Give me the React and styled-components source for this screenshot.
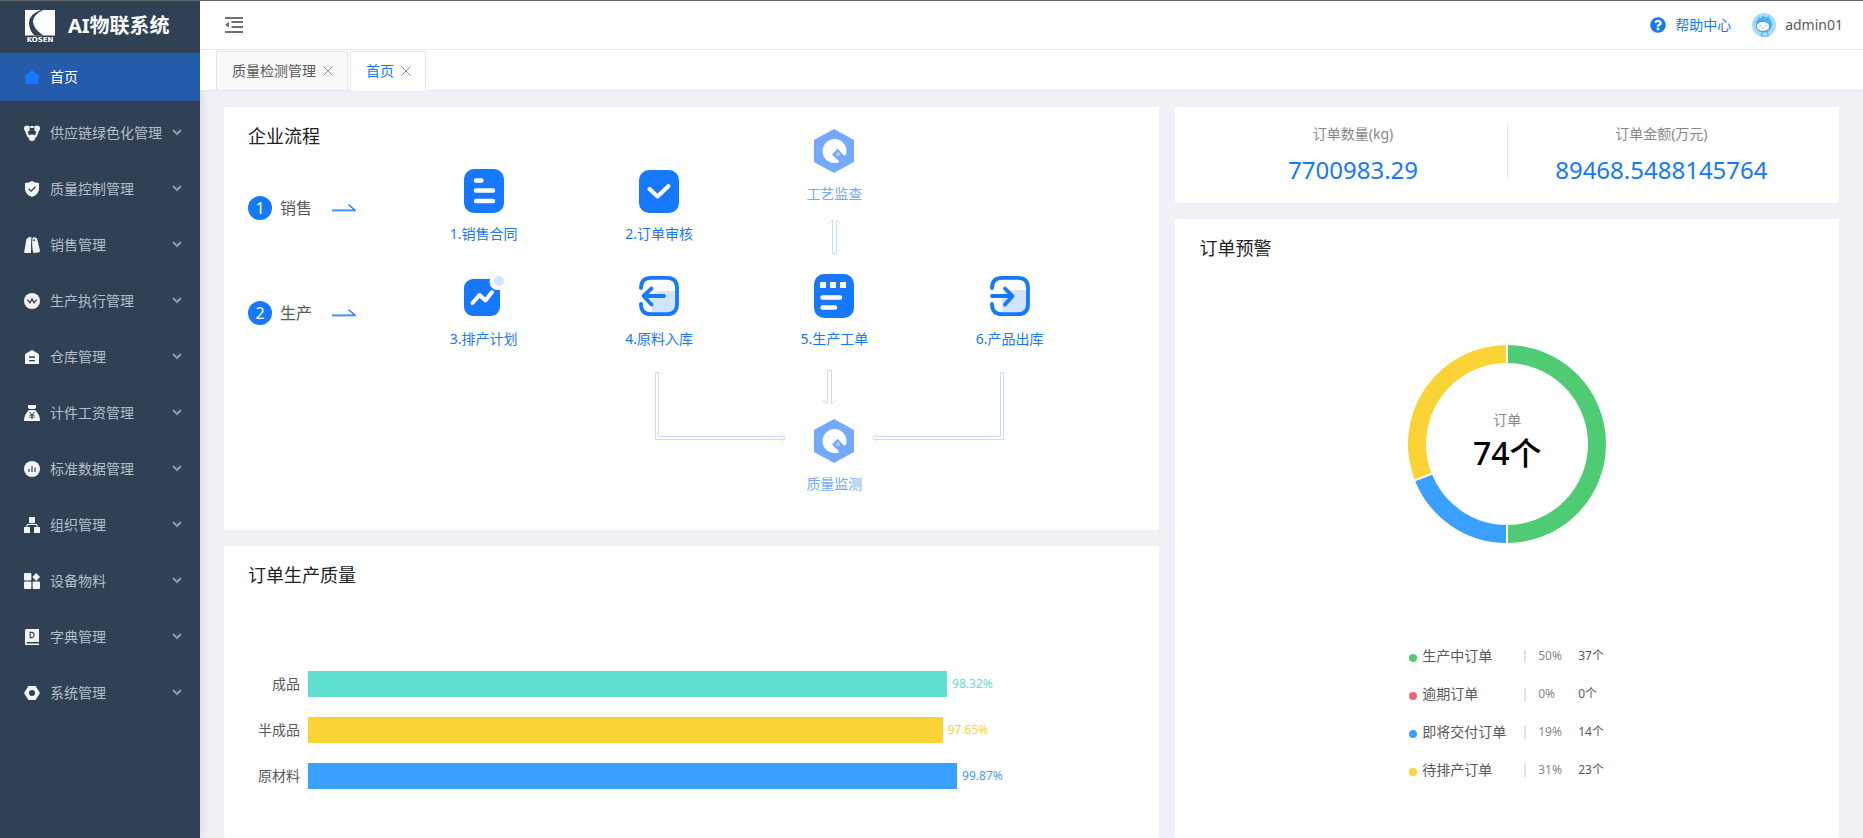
import React from "react";
import styled, { createGlobalStyle } from "styled-components";
import { FaQuestionCircle } from "react-icons/fa";

const GlobalStyle = createGlobalStyle`
  * {
    box-sizing: border-box;
  }

  body {
    margin: 0;
    background-color: #f0f1f6;
    color: #595959;
    font-family: "Noto Sans", "Noto Sans CJK SC", sans-serif;
    font-size: 14px;
    line-height: 22px;
  }

  a {
    color: inherit;
    text-decoration: none;
  }

  button {
    padding: 0;
    border: none;
    background: none;
    color: inherit;
    font: inherit;
    cursor: pointer;
  }

  ul {
    margin: 0;
    padding: 0;
    list-style: none;
  }

  svg {
    display: block;
    flex: none;
  }
`;

const Page = styled.div`
  display: flex;
  height: 100vh;
  overflow: hidden;
  border-top: 1px solid #666666;
`;

const Sidebar = styled.aside`
  flex: none;
  width: 200px;
  background-color: #304156;
  box-shadow: 2px 0 8px rgba(0, 21, 41, 0.1);
`;

const Brand = styled.a`
  display: flex;
  align-items: center;
  gap: 12px;
  height: 52px;
  padding: 0 24px 2px;
  color: #ffffff;
  font-size: 20px;
  font-weight: 700;
  white-space: nowrap;
`;

const Menu = styled.ul`
  display: flex;
  flex-direction: column;
  gap: 8px;
`;

const MenuItem = styled.button`
  display: flex;
  align-items: center;
  gap: 10px;
  width: 100%;
  height: 48px;
  padding: 0 18px 0 24px;
  color: ${props => (props.$active ? "#ffffff" : "#b7bdc6")};
  background-color: ${props => (props.$active ? "#245bab" : "transparent")};
  text-align: left;
  white-space: nowrap;
`;

const MenuName = styled.span`
  flex: 1;
`;

const Main = styled.div`
  display: flex;
  flex: 1;
  flex-direction: column;
  min-width: 0;
`;

const Header = styled.header`
  position: relative;
  z-index: 1;
  display: flex;
  flex: none;
  justify-content: space-between;
  align-items: center;
  height: 49px;
  padding: 0 20px 0 24px;
  background-color: #ffffff;
  border-bottom: 1px solid #e6e7ea;
`;

const HeaderTools = styled.div`
  display: flex;
  align-items: center;
  gap: 21px;
`;

const HeaderLink = styled.a`
  display: flex;
  align-items: center;
  gap: 9px;
  color: ${props => (props.$primary ? "#1677ff" : "#595959")};
`;

const Tabs = styled.nav`
  position: relative;
  z-index: 1;
  display: flex;
  flex: none;
  gap: 2px;
  height: 41px;
  padding: 1px 16px 0;
  background-color: #ffffff;
  border-bottom: 1px solid #e4e6ea;
`;

const Tab = styled.div`
  display: flex;
  align-items: center;
  gap: 7px;
  height: 40px;
  padding: 0 14px 0 15px;
  color: ${props => (props.$active ? "#1677ff" : "#595959")};
  background-color: ${props => (props.$active ? "#ffffff" : "#fafafa")};
  border: 1px solid #e4e6ea;
  border-bottom-color: ${props => (props.$active ? "#ffffff" : "#e4e6ea")};
  border-radius: 2px 2px 0 0;
`;

const Content = styled.main`
  display: grid;
  flex: 1;
  grid-template-columns: repeat(24, minmax(0, 1fr));
  gap: 16px;
  padding: 16px 24px 0;
`;

const Column = styled.div`
  display: flex;
  flex-direction: column;
  grid-column: span ${props => props.$span};
  gap: 16px;
`;

const Card = styled.section`
  padding: 0 24px;
  background-color: #ffffff;
  border-radius: 2px;
  flex: ${props => (props.$grow ? "1" : "none")};
`;

const CardTitle = styled.h2`
  margin: 0;
  padding-top: 16px;
  color: #222222;
  font-size: 18px;
  font-weight: 400;
  line-height: 26px;
`;

const Flow = styled.div`
  display: grid;
  grid-template-columns: 148px repeat(4, minmax(0, 1fr));
  grid-template-rows: 51px 105px 105px 162px;
  padding-right: 38px;
`;

const FlowTitle = styled(CardTitle)`
  grid-area: 1 / 1 / 2 / 4;
`;

const Stage = styled.div`
  display: flex;
  grid-column: 1;
  grid-row: ${props => props.$row};
  align-items: center;
  gap: 8px;
  height: 100px;
  color: #595959;
  font-size: 16px;
`;

const StageNumber = styled.span`
  width: 24px;
  height: 24px;
  border-radius: 50%;
  background-color: #1677ff;
  color: #ffffff;
  line-height: 24px;
  text-align: center;
`;

const StageName = styled.span`
  margin-right: 12px;
`;

const Step = styled.a`
  display: flex;
  flex-direction: column;
  grid-column: ${props => props.$col};
  grid-row: ${props => props.$row};
  align-items: center;
  gap: 10px;
  padding-top: 11px;
  color: #1677ff;
`;

const Check = styled.div`
  display: flex;
  flex-direction: column;
  grid-column: 4;
  grid-row: ${props => props.$row};
  align-items: center;
  gap: 14px;
  padding-top: ${props => props.$top}px;
`;

const CheckLink = styled.a`
  display: flex;
  flex-direction: column;
  align-items: center;
  gap: 10px;
  color: #73aaff;
`;

const Joins = styled.div`
  display: flex;
  grid-area: 4 / 3 / 5 / 6;
  justify-content: center;
  pointer-events: none;
`;

const Bars = styled.ul`
  display: flex;
  flex-direction: column;
  gap: 20px;
  padding: 83px 20% 0 0;
`;

const BarRow = styled.li`
  display: grid;
  grid-template-columns: 52px minmax(0, 1fr);
  gap: 8px;
  align-items: center;
  height: 26px;
  text-align: right;
  white-space: nowrap;
`;

const Track = styled.div`
  display: flex;
  align-items: center;
  gap: 5px;
`;

const Bar = styled.div`
  flex: none;
  height: 26px;
  background-color: ${props => props.$color};
`;

const BarValue = styled.span`
  color: ${props => props.$color};
  font-size: 12px;
`;

const Totals = styled(Card)`
  display: flex;
  height: 96px;
  padding: 16px 24px 24px;
`;

const Total = styled.div`
  display: flex;
  flex: 1;
  flex-direction: column;
  align-items: center;
  color: #888888;

  & + & {
    border-left: 1px solid #e4e6ea;
  }
`;

const TotalValue = styled.strong`
  color: #1677ff;
  font-size: 24px;
  font-weight: 400;
  line-height: 50px;
`;

const Donut = styled.div`
  display: grid;
  justify-content: center;
  align-items: center;
  padding-top: 84px;

  & > * {
    grid-area: 1 / 1;
  }
`;

const DonutText = styled.div`
  display: flex;
  flex-direction: column;
  align-items: center;
  padding-bottom: 4px;
  color: #888888;
`;

const DonutValue = styled.strong`
  color: #000000;
  font-size: 32px;
  font-weight: 500;
  line-height: 44px;
`;

const Legend = styled.ul`
  width: 196px;
  margin: 94px auto 0;
`;

const LegendRow = styled.li`
  display: grid;
  grid-template-columns: 8px 97px 9px 35px auto;
  gap: 5px;
  align-items: center;
  height: 38px;
  font-size: 12px;
  white-space: nowrap;
`;

const Dot = styled.span`
  width: 8px;
  height: 8px;
  margin-top: 3px;
  border-radius: 50%;
  background-color: ${props => props.$color};
`;

const LegendName = styled.span`
  font-size: 14px;
`;

const Separator = styled.span`
  width: 2px;
  height: 13px;
  background-color: #e2e2e2;
`;

const Percent = styled.span`
  color: #888888;
`;

// 16px white glyphs of the side menu, holes use the sidebar colour
const menuIcons = {
  home: <path d="M8 1 L15.5 7.2 Q16 8 15 8.6 H14.3 V14 Q14.3 15 13.3 15 H2.7 Q1.7 15 1.7 14 V8.6 H1 Q0 8 .5 7.2 Z" fill="#1677ff" />,
  chain: (
    <>
      <path d="M4.5 2 H11.5 L13.6 6.6 L11.6 11.4 H4.4 L2.4 6.6 Z" fill="none" stroke="#f4f5f6" strokeWidth="2.2" strokeLinejoin="round" />
      <circle cx="3" cy="3.4" r="3" />
      <circle cx="13" cy="3.4" r="3" />
      <circle cx="8" cy="12.8" r="3.2" />
      <path d="M5.9 1 V4.4 M10.1 1 V4.4" stroke="#304156" strokeWidth=".7" />
    </>
  ),
  shield: (
    <>
      <path d="M8 0 Q11 2 15 2 V8 Q15 13 8 16 Q1 13 1 8 V2 Q5 2 8 0 Z" />
      <path d="M4.6 7.8 L7.2 10.2 L11.4 5.8" fill="none" stroke="#304156" strokeWidth="1.3" />
    </>
  ),
  tags: (
    <>
      <path d="M5 0 H7.4 L7 16 H1 Q0 16 .2 15 L2.5 2 Z" />
      <path d="M7.8 2 L10 0 L13 1.6 L16 13.8 Q16 15 15 15.2 L10.4 16 Q8.8 16 8.6 14.6 Z" />
      <circle cx="10.2" cy="3.2" r=".9" fill="#304156" />
      <path d="M8 2 L7.4 8 L8.4 16" fill="none" stroke="#304156" strokeWidth=".8" />
    </>
  ),
  wave: (
    <>
      <circle cx="8" cy="8" r="8" />
      <path d="M3.4 6.6 L6 9.8 L8 6 L10 9.8 L12.6 6.6" fill="none" stroke="#304156" strokeWidth="1.3" />
    </>
  ),
  store: (
    <>
      <path d="M8 1 L14 4.6 Q15 5.2 15 6 V15 H1 V6 Q1 5.2 2 4.6 Z" />
      <path d="M5 8 H11 M5 11.6 H11" stroke="#304156" strokeWidth="1.4" />
    </>
  ),
  money: (
    <>
      <path d="M4 0 H12 V2.4 L10.8 4 H5.2 L4 2.4 Z" />
      <path d="M5 5 H11 Q16 9.4 16 16 H0 Q0 9.4 5 5 Z" />
      <path d="M5.6 7 L8 10 L10.4 7 M8 10 V14 M5.4 10.2 H10.6 M5.4 12.2 H10.6" fill="none" stroke="#304156" strokeWidth="1" />
    </>
  ),
  stats: (
    <>
      <circle cx="8" cy="8" r="8" />
      <path d="M5 8 V11 M8 5 V11 M11 6.4 V11" stroke="#304156" strokeWidth="1.2" />
    </>
  ),
  tree: (
    <>
      <path d="M5 0 H11 V6 H5 Z M0 10 H6 V16 H0 Z M10 10 H16 V16 H10 Z" />
      <path d="M8 6 V8 M3 10 V7.5 H13 V10" fill="none" stroke="#f4f5f6" />
    </>
  ),
  blocks: (
    <>
      <rect width="7.4" height="7.4" rx="1" />
      <rect y="8.6" width="7.4" height="7.4" rx="1" />
      <rect x="8.6" y="8.6" width="7.4" height="7.4" rx="1" />
      <path d="M12.2 0 L16 4 L12.2 8 L8.4 4 Z" />
    </>
  ),
  book: (
    <>
      <path d="M2 0 H15 V13 H1 V1 Z M1 13 H2.6 V14.4 H15 V16 H2 Q1 16 1 15 Z" />
      <path d="M6.2 3.4 H8 Q10.2 3.8 10.2 6 Q10.2 8.2 8 8.6 H6.2 Z" fill="none" stroke="#304156" strokeWidth="1.1" />
    </>
  ),
  nut: <path fillRule="evenodd" d="M4.4 1 H11.6 L16 8 L11.6 15 H4.4 L0 8 Z M8 5 A3 3 0 1 0 8 11 A3 3 0 1 0 8 5 Z" />
};

function MenuIcon({ name }) {
  return (
    <svg width="16" height="16" viewBox="0 0 16 16" fill="#f4f5f6">
      {menuIcons[name]}
    </svg>
  );
}

function Chevron() {
  return (
    <svg width="10" height="8" viewBox="0 0 10 8" fill="none" stroke="#8f99a5" strokeWidth="2">
      <path d="M1 1 L5 5 L9 1" />
    </svg>
  );
}

function Logo() {
  return (
    <svg width="32" height="32" viewBox="0 0 32 32">
      <rect x="1" width="30" height="25.5" fill="#ffffff" />
      <path d="M17 0 Q5 4 5 13 Q5 20 10.5 25.5 H19.5 Q9.5 19 9 12 Q9 5 19 0 Z" fill="#304156" />
      <text x="16" y="31.5" fill="#ffffff" fontSize="7" fontWeight="700" textAnchor="middle" fontFamily="DejaVu Sans, sans-serif" textRendering="geometricPrecision">
        KOSEN
      </text>
    </svg>
  );
}

function FoldIcon() {
  return (
    <svg width="20" height="18" viewBox="0 0 20 18" fill="#707070">
      <path d="M1 1 H19 V3 H1 Z M7.5 5 H19 V7 H7.5 Z M7.5 10 H19 V12 H7.5 Z M1 15 H19 V17 H1 Z M1 8.7 L5 5.7 V11.7 Z" />
    </svg>
  );
}

function CloseIcon() {
  return (
    <svg width="10" height="10" viewBox="0 0 10 10" stroke="#8c8c8c">
      <path d="M.5 .5 L9.5 9.5 M9.5 .5 L.5 9.5" />
    </svg>
  );
}

function Avatar() {
  return (
    <svg width="24" height="24" viewBox="0 0 24 24">
      <circle cx="12" cy="12" r="12" fill="#a9dcfb" />
      <path d="M6 4 L9 5 L11 2.6 L13 4.6 L17 3.4 L17.6 6 Q21 9 19.6 14 Q18 18 15.6 18.4 L17 22.8 Q13 24.6 8.4 23 L10 19 Q5 18.4 4 14 Q3 8 6.4 6.4 Z" fill="#45b2f8" />
      <ellipse cx="11" cy="13.4" rx="6.6" ry="5" fill="#ffffff" stroke="#3c86cf" strokeWidth=".8" />
      <path d="M7.6 13 Q8.4 12 9.2 13 M12.8 13 Q13.6 12 14.4 13 M10.4 15 Q11 15.6 11.6 15" fill="none" stroke="#4a8fe0" strokeWidth=".8" />
      <path d="M11 19.6 H15 L15.6 22 Q13 23.4 10.4 22.2 Z" fill="#c4dcff" />
    </svg>
  );
}

function StageArrow() {
  return (
    <svg width="24" height="8" viewBox="0 0 24 8" fill="none">
      <path d="M0 7.2 H24" stroke="#a9cbff" strokeWidth="1.2" />
      <path d="M0 6.2 H23 L16.4 .6" stroke="#1677ff" strokeWidth="1.3" />
    </svg>
  );
}

const stepIcons = {
  contract: (
    <>
      <rect width="40" height="44" rx="10" fill="#1677ff" />
      <path d="M12 11.5 H17.5 M12 21.5 H29 M12 32 H29" stroke="#ffffff" strokeWidth="4.4" strokeLinecap="round" />
    </>
  ),
  audit: (
    <>
      <rect y="1" width="40" height="43" rx="10" fill="#1677ff" />
      <path d="M10.5 20 L18.5 27.5 L29.5 17" fill="none" stroke="#ffffff" strokeWidth="4" strokeLinecap="round" strokeLinejoin="round" />
    </>
  ),
  plan: (
    <>
      <rect y="5" width="36" height="37" rx="9" fill="#1677ff" />
      <circle cx="33.5" cy="8" r="8" fill="#ffffff" />
      <circle cx="35" cy="7" r="5" fill="#d0e3ff" />
      <path d="M8.5 29 L15.5 21 L21.5 26.5 L28 18" fill="none" stroke="#ffffff" strokeWidth="4" strokeLinecap="round" strokeLinejoin="round" />
    </>
  ),
  inbound: (
    <>
      <path d="M13 38 V25 Q14 17 22 17 H38 V30 Q37 39 29 39 H14 Z" fill="#d0e3ff" />
      <path d="M2 14 Q2 3.8 12 3.8 H28 Q38 3.8 38 14 V30 Q38 40.2 28 40.2 H12 Q2 40.2 2 30" fill="none" stroke="#1677ff" strokeWidth="3.8" strokeLinecap="round" />
      <path d="M25 22 H5 M12.5 14.5 L4.5 22 L12.5 30.5" fill="none" stroke="#1677ff" strokeWidth="3.8" strokeLinecap="round" strokeLinejoin="round" />
    </>
  ),
  order: (
    <>
      <rect width="40" height="44" rx="10" fill="#1677ff" />
      <path d="M6 8 H12 V14 H6 Z M16 8 H22 V14 H16 Z M26 8 H32 V14 H26 Z" fill="#ffffff" />
      <path d="M8.5 23.5 H26 M8.5 33.5 H21" stroke="#ffffff" strokeWidth="4.4" strokeLinecap="round" />
    </>
  ),
  outbound: (
    <>
      <path d="M12 38 V23 Q13 16 20 16 H38 V30 Q37 39 29 39 H13 Z" fill="#d0e3ff" />
      <path d="M2 14 Q2 3.8 12 3.8 H28 Q38 3.8 38 14 V30 Q38 40.2 28 40.2 H12 Q2 40.2 2 30" fill="none" stroke="#1677ff" strokeWidth="3.8" strokeLinecap="round" />
      <path d="M2 22 H22 M15 14.5 L22.5 22 L15 30.5" fill="none" stroke="#1677ff" strokeWidth="3.8" strokeLinecap="round" strokeLinejoin="round" />
    </>
  ),
  check: (
    <>
      <path d="M20 0 L40 11 V33 L20 44 L0 33 V11 Z" fill="#73aaff" />
      <path d="M32 25.5 A12 12 0 1 0 25 33.2 Q25 32 24 31.2 L18 25.5 L23.6 19.8 L29.4 26 Q31 27.4 32 25.5 Z" fill="#ffffff" />
      <circle cx="24" cy="25.2" r="2" fill="#b5d1ff" />
    </>
  )
};

function StepIcon({ name }) {
  return (
    <svg width="40" height="44" viewBox="0 0 40 44">
      {stepIcons[name]}
    </svg>
  );
}

function UpArrow() {
  return (
    <svg width="14" height="36" viewBox="0 0 14 36" fill="none" stroke="#c9deff">
      <path d="M1 5 L5.5 1 V34.5 H9.5 V1 L13 5" />
    </svg>
  );
}

function JoinLines() {
  return (
    <svg width="360" height="80" viewBox="0 0 360 80" fill="none" stroke="#c9deff">
      <path d="M127 65.5 L131.5 70 L127 75 M131 68.5 H4.5 V4.5 H1.5 V71.5 H131" />
      <path d="M169 32 L173.5 36 V2.5 H177.5 V36 L182 32" />
      <path d="M223 65.5 L218.5 70 L223 75 M219 68.5 H346.5 V4.5 H349.5 V71.5 H219" />
    </svg>
  );
}

// ring segment between two fractions of the full circle
function Segment({ from, to, color }) {
  const radius = 90;
  const point = part => {
    const angle = part * 2 * Math.PI;
    return `${99 + radius * Math.sin(angle)} ${99 - radius * Math.cos(angle)}`;
  };
  return (
    <path
      d={`M${point(from)} A${radius} ${radius} 0 0 1 ${point(to)}`}
      fill="none"
      stroke={color}
      strokeWidth="18"
    />
  );
}

function Ring() {
  const cuts = [0, 0.5, 0.69];
  return (
    <svg width="198" height="198" viewBox="0 0 198 198">
      <Segment from={0} to={0.5} color="#4ecb73" />
      <Segment from={0.5} to={0.69} color="#3aa0ff" />
      <Segment from={0.69} to={1} color="#fad337" />
      {cuts.map(cut => {
        return (
          <path
            key={cut}
            d="M99 0 V20"
            stroke="#ffffff"
            strokeWidth="2"
            transform={`rotate(${cut * 360} 99 99)`}
          />
        );
      })}
    </svg>
  );
}

export default function App() {
  const menu = [
    { icon: "home", name: "首页", active: true },
    { icon: "chain", name: "供应链绿色化管理" },
    { icon: "shield", name: "质量控制管理" },
    { icon: "tags", name: "销售管理" },
    { icon: "wave", name: "生产执行管理" },
    { icon: "store", name: "仓库管理" },
    { icon: "money", name: "计件工资管理" },
    { icon: "stats", name: "标准数据管理" },
    { icon: "tree", name: "组织管理" },
    { icon: "blocks", name: "设备物料" },
    { icon: "book", name: "字典管理" },
    { icon: "nut", name: "系统管理" }
  ];

  const tabs = [{ name: "质量检测管理" }, { name: "首页", active: true }];

  const stages = [
    { row: 2, number: 1, name: "销售" },
    { row: 3, number: 2, name: "生产" }
  ];

  const steps = [
    { col: 2, row: 2, icon: "contract", name: "1.销售合同" },
    { col: 3, row: 2, icon: "audit", name: "2.订单审核" },
    { col: 2, row: 3, icon: "plan", name: "3.排产计划" },
    { col: 3, row: 3, icon: "inbound", name: "4.原料入库" },
    { col: 4, row: 3, icon: "order", name: "5.生产工单" },
    { col: 5, row: 3, icon: "outbound", name: "6.产品出库" }
  ];

  const quality = [
    { name: "成品", value: 98.32, color: "#5fe0d0" },
    { name: "半成品", value: 97.65, color: "#fad337" },
    { name: "原材料", value: 99.87, color: "#3aa0ff" }
  ];

  const orders = [
    { name: "生产中订单", percent: "50%", count: "37个", color: "#4ecb73" },
    { name: "逾期订单", percent: "0%", count: "0个", color: "#f2637b" },
    { name: "即将交付订单", percent: "19%", count: "14个", color: "#3aa0ff" },
    { name: "待排产订单", percent: "31%", count: "23个", color: "#fad337" }
  ];

  return (
    <>
      <GlobalStyle />
      <Page>
        <Sidebar>
          <Brand href="#">
            <Logo />
            AI物联系统
          </Brand>
          <Menu>
            {menu.map(item => {
              return (
                <li key={item.name}>
                  <MenuItem type="button" $active={item.active}>
                    <MenuIcon name={item.icon} />
                    <MenuName>{item.name}</MenuName>
                    {!item.active && <Chevron />}
                  </MenuItem>
                </li>
              );
            })}
          </Menu>
        </Sidebar>
        <Main>
          <Header>
            <button type="button" aria-label="收起菜单">
              <FoldIcon />
            </button>
            <HeaderTools>
              <HeaderLink href="#" $primary>
                <FaQuestionCircle size={16} />
                帮助中心
              </HeaderLink>
              <HeaderLink href="#">
                <Avatar />
                admin01
              </HeaderLink>
            </HeaderTools>
          </Header>
          <Tabs>
            {tabs.map(tab => {
              return (
                <Tab key={tab.name} $active={tab.active}>
                  <a href="#">{tab.name}</a>
                  <button type="button" aria-label="关闭">
                    <CloseIcon />
                  </button>
                </Tab>
              );
            })}
          </Tabs>
          <Content>
            <Column $span={14}>
              <Card>
                <Flow>
                  <FlowTitle>企业流程</FlowTitle>
                  {stages.map(stage => {
                    return (
                      <Stage key={stage.name} $row={stage.row}>
                        <StageNumber>{stage.number}</StageNumber>
                        <StageName>{stage.name}</StageName>
                        <StageArrow />
                      </Stage>
                    );
                  })}
                  {steps.map(step => {
                    return (
                      <Step key={step.name} href="#" $col={step.col} $row={step.row}>
                        <StepIcon name={step.icon} />
                        {step.name}
                      </Step>
                    );
                  })}
                  <Check $row="1 / 3" $top={22}>
                    <CheckLink href="#">
                      <StepIcon name="check" />
                      工艺监查
                    </CheckLink>
                    <UpArrow />
                  </Check>
                  <Joins>
                    <JoinLines />
                  </Joins>
                  <Check $row="4" $top={51}>
                    <CheckLink href="#">
                      <StepIcon name="check" />
                      质量监测
                    </CheckLink>
                  </Check>
                </Flow>
              </Card>
              <Card $grow>
                <CardTitle>订单生产质量</CardTitle>
                <Bars>
                  {quality.map(item => {
                    return (
                      <BarRow key={item.name}>
                        <span>{item.name}</span>
                        <Track>
                          <Bar $color={item.color} style={{ width: `${item.value}%` }} />
                          <BarValue $color={item.color}>{item.value}%</BarValue>
                        </Track>
                      </BarRow>
                    );
                  })}
                </Bars>
              </Card>
            </Column>
            <Column $span={10}>
              <Totals>
                <Total>
                  订单数量(kg)
                  <TotalValue>7700983.29</TotalValue>
                </Total>
                <Total>
                  订单金额(万元)
                  <TotalValue>89468.5488145764</TotalValue>
                </Total>
              </Totals>
              <Card $grow>
                <CardTitle>订单预警</CardTitle>
                <Donut>
                  <Ring />
                  <DonutText>
                    订单
                    <DonutValue>74个</DonutValue>
                  </DonutText>
                </Donut>
                <Legend>
                  {orders.map(order => {
                    return (
                      <LegendRow key={order.name}>
                        <Dot $color={order.color} />
                        <LegendName>{order.name}</LegendName>
                        <Separator />
                        <Percent>{order.percent}</Percent>
                        <span>{order.count}</span>
                      </LegendRow>
                    );
                  })}
                </Legend>
              </Card>
            </Column>
          </Content>
        </Main>
      </Page>
    </>
  );
}
